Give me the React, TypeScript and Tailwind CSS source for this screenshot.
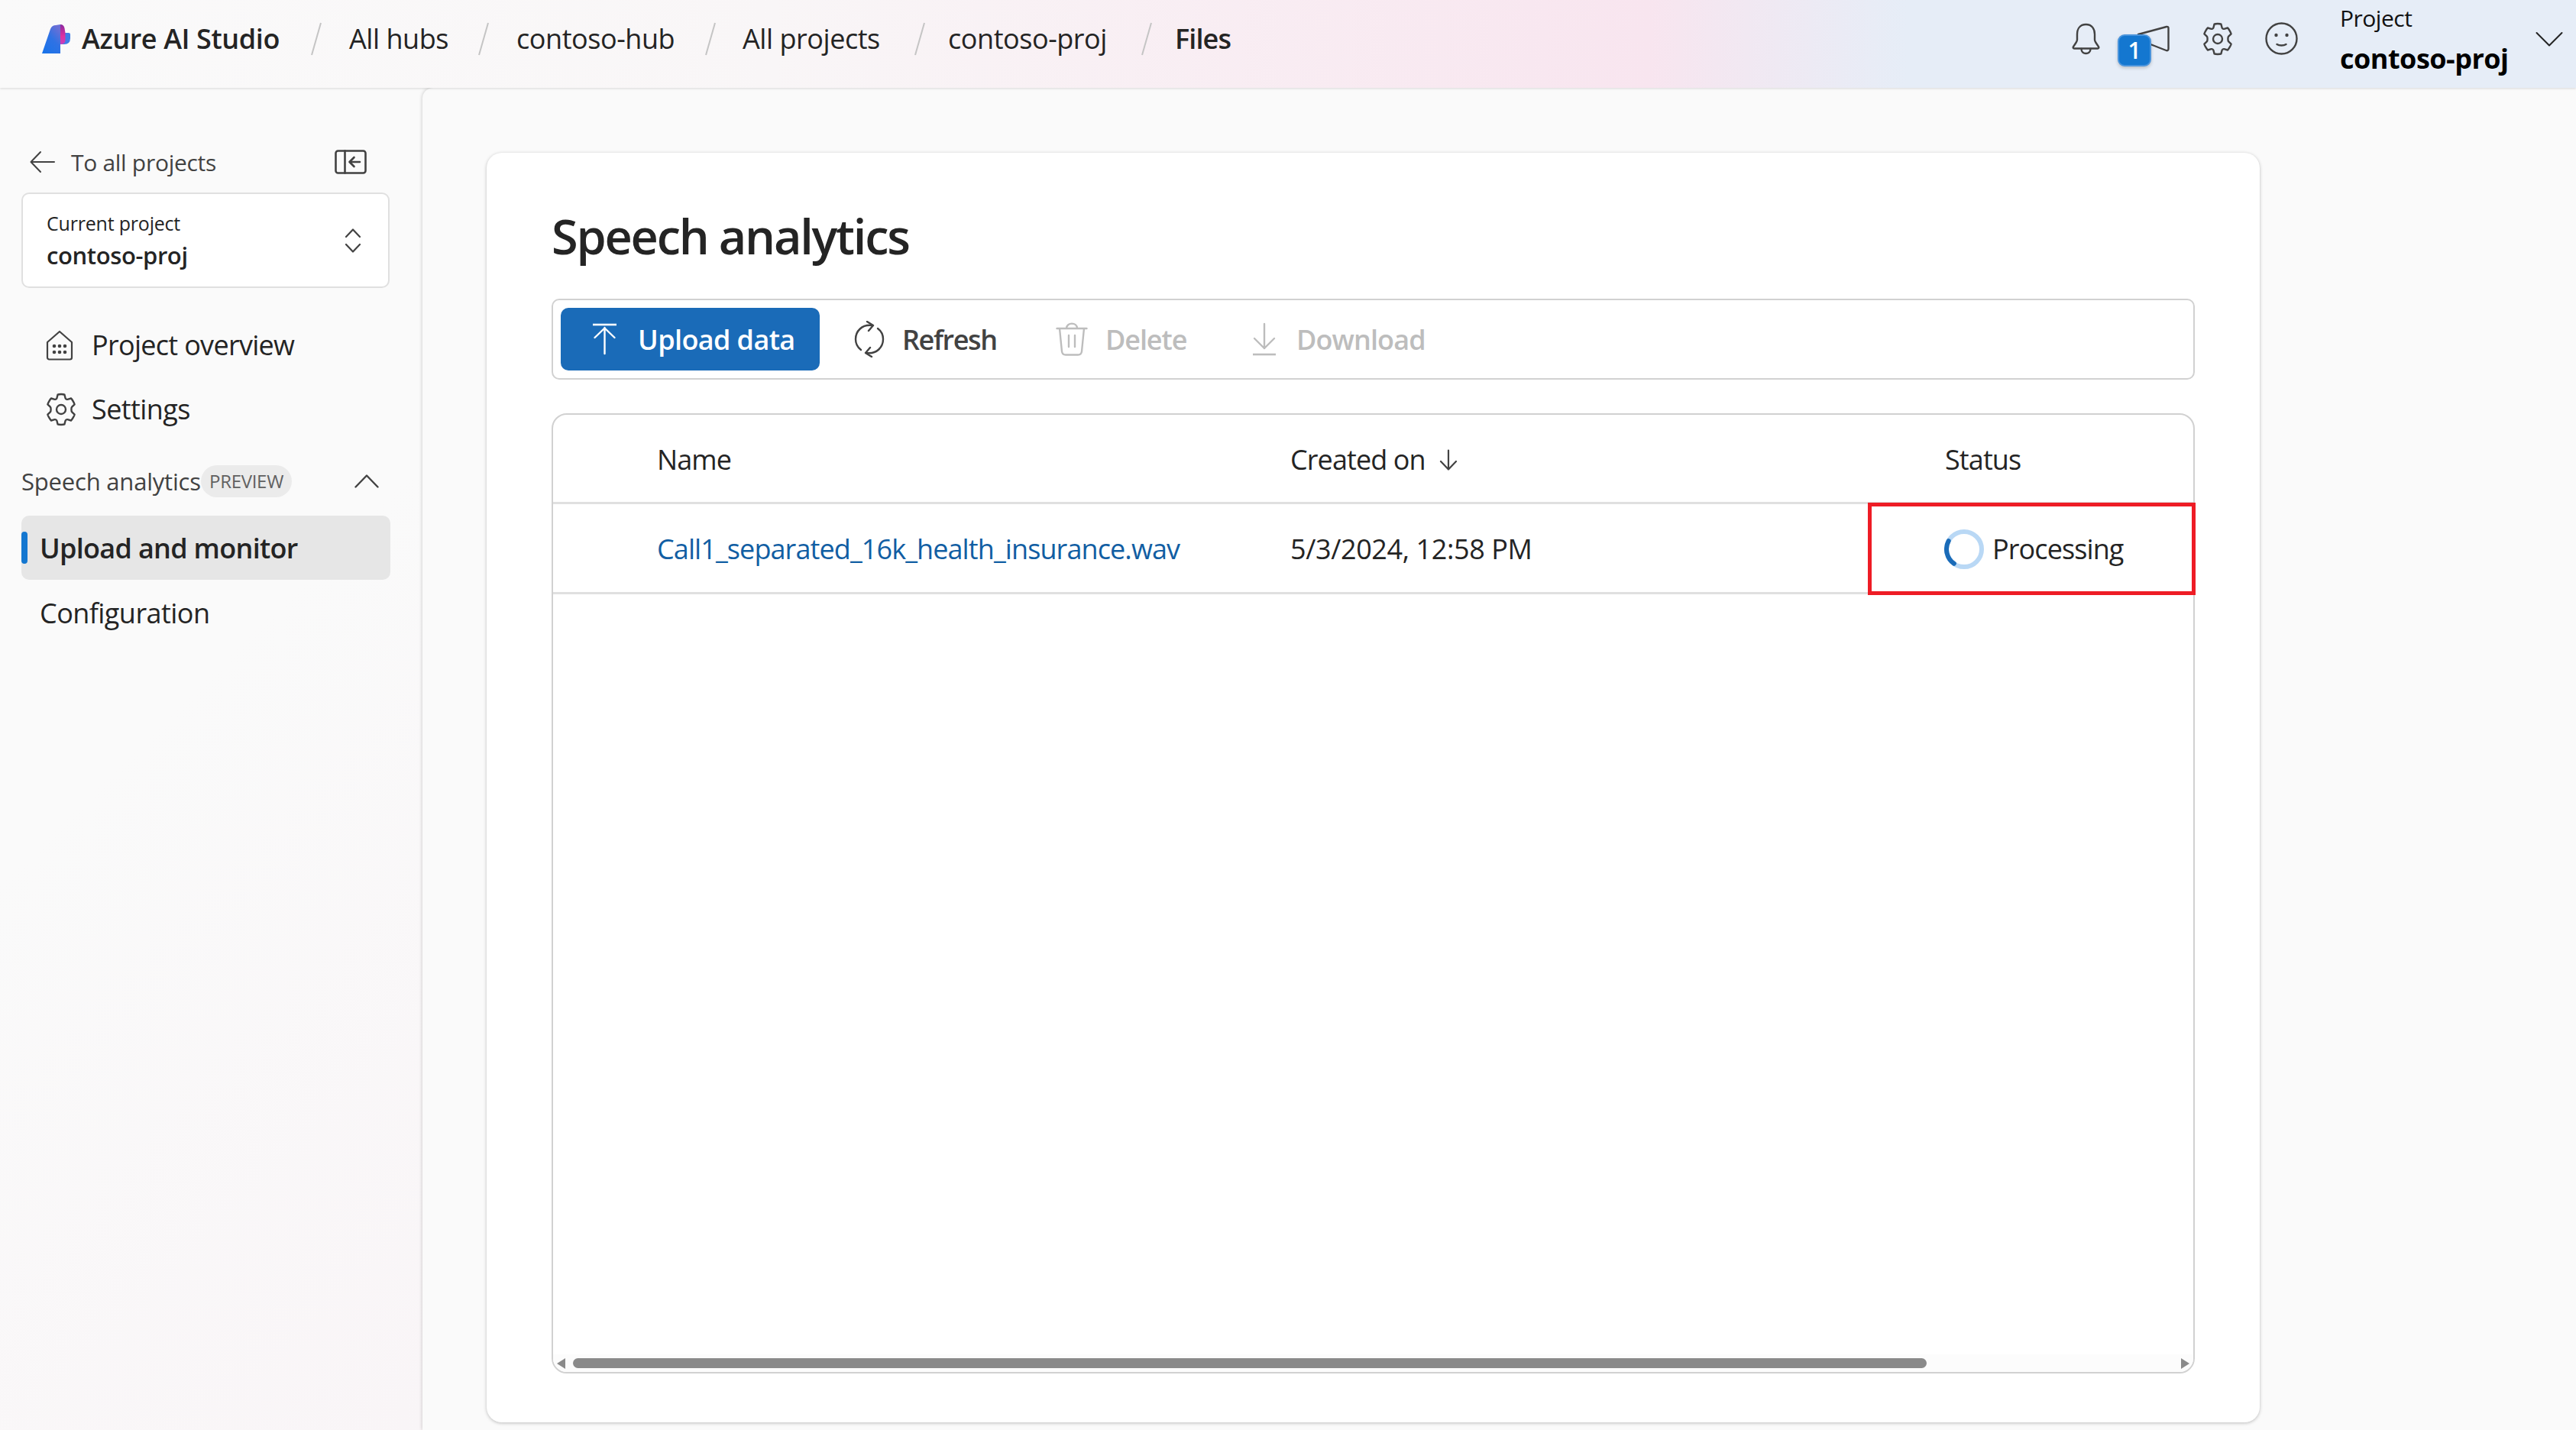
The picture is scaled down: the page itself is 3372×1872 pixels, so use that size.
import React from "react";

const S = ({ w, h, vb, children, className = "", color = "#424242", sw = 2 }: any) => (
  <svg width={w} height={h} viewBox={vb} fill="none" stroke={color} strokeWidth={sw} strokeLinecap="round" strokeLinejoin="round" className={"shrink-0 " + className}>
    {children}
  </svg>
);

const Logo = () => (
  <svg width="38" height="40" viewBox="14 8 38 40" className="shrink-0">
    <defs>
      <linearGradient id="lg1" x1="0" y1="1" x2="0.7" y2="0">
        <stop offset="0" stopColor="#1673ea" />
        <stop offset="0.6" stopColor="#2f72e4" />
        <stop offset="1" stopColor="#6a6fd6" />
      </linearGradient>
      <linearGradient id="lg2" x1="0" y1="0" x2="0" y2="1">
        <stop offset="0" stopColor="#8a2aa0" />
        <stop offset="0.6" stopColor="#e030a0" />
        <stop offset="1" stopColor="#c040c0" />
      </linearGradient>
    </defs>
    <path d="M44 20 H49 Q51 20 51 22 V27 Q51 35 43 35 H38 V20 Z" fill="#3f7ce8" />
    <path d="M14 47 L25 15 Q27 10 32 10 L38 9 V47 Z" fill="url(#lg1)" />
    <path d="M38 9 Q42.5 9 43.5 14 L44.5 20 L44.5 30 Q44.5 35 38 35 Z" fill="url(#lg2)" />
  </svg>
);

const Slash = ({ className = "" }: { className?: string }) => (
  <svg width="16" height="44" viewBox="0 0 16 44" className={"shrink-0 " + className}>
    <line x1="14" y1="1" x2="2" y2="43" stroke="#c4c4c4" strokeWidth="2" />
  </svg>
);

const Gear = ({ size = 44, color = "#424242" }: { size?: number; color?: string }) => (
  <S w={size} h={size} vb="0 0 44 44" color={color} sw={2.4}>
    <circle cx="22" cy="22" r="6" />
    <path d="M17.6 2.6 C19 1.8 25 1.8 26.4 2.6 L27.6 7.2 C27.9 8.3 29.3 9.1 30.4 8.8 L35 7.5 C36.4 8.7 39.4 13.8 39.6 15.4 L36.2 18.7 C35.4 19.5 35.4 21.1 35.4 22 C35.4 22.9 35.4 24.5 36.2 25.3 L39.6 28.6 C39.4 30.2 36.4 35.3 35 36.5 L30.4 35.2 C29.3 34.9 27.9 35.7 27.6 36.8 L26.4 41.4 C25 42.2 19 42.2 17.6 41.4 L16.4 36.8 C16.1 35.7 14.7 34.9 13.6 35.2 L9 36.5 C7.6 35.3 4.6 30.2 4.4 28.6 L7.8 25.3 C8.6 24.5 8.6 22.9 8.6 22 C8.6 21.1 8.6 19.5 7.8 18.7 L4.4 15.4 C4.6 13.8 7.6 8.7 9 7.5 L13.6 8.8 C14.7 9.1 16.1 8.3 16.4 7.2 Z" />
  </S>
);

const font = "font-['Open_Sans',sans-serif]";

export default function App() {
  return (
    <div className={"w-[3372px] h-[1872px] overflow-hidden flex flex-col bg-[#fafafa] text-[#242424] " + font}>
      {/* Header */}
      <header className="relative z-10 h-[115px] shrink-0 flex items-center pl-[55px] pr-[17px] bg-[linear-gradient(to_right,#fafafa_0%,#f9f6f7_30%,#f8e5ef_64%,#e6edf7_74%,#e6edf7_100%)] shadow-[0_1px_3px_rgba(0,0,0,0.14)]">
        <div className="flex items-center h-full pb-[14px]">
          <Logo />
          <span className="ml-[14px] w-[299px] text-[36px] font-semibold whitespace-nowrap tracking-[-0.4px]">Azure AI Studio</span>
          <Slash />
          <span className="ml-[35px] w-[168px] text-[36px] whitespace-nowrap tracking-[-0.45px]">All hubs</span>
          <Slash />
          <span className="ml-[35px] w-[246px] text-[36px] whitespace-nowrap tracking-[-0.45px]">contoso-hub</span>
          <Slash />
          <span className="ml-[34px] w-[224px] text-[36px] whitespace-nowrap tracking-[-0.45px]">All projects</span>
          <Slash />
          <span className="ml-[29px] w-[252px] text-[36px] whitespace-nowrap tracking-[-0.45px]">contoso-proj</span>
          <Slash />
          <span className="ml-[29px] text-[36px] font-semibold whitespace-nowrap tracking-[-0.9px]">Files</span>
        </div>
        <div className="ml-auto flex items-center h-full">
          <div className="flex items-center pb-[14px]">
            <S w={37} h={42} vb="0 0 37 42" sw={2.4}>
              <path d="M18.5 2 C10.5 2 7 8 7 15 V22 C7 25 3 29 1.8 31.5 C1.4 32.6 2 33.5 3 33.5 H34 C35 33.5 35.6 32.6 35.2 31.5 C34 29 30 25 30 22 V15 C30 8 26.5 2 18.5 2 Z" />
              <path d="M12.5 34 C12.5 42 24.5 42 24.5 34" />
            </S>
            <div className="relative ml-[48px] w-[43px] h-[36px]">
              <S w={43} h={36} vb="0 0 43 36" sw={2.4}>
                <path d="M2 12 L39 2 C40.5 1.6 41.5 2.5 41.5 4 V31 C41.5 33 40 33.6 38.5 33 L18 25" />
                <path d="M18 25 C17 31 12 31 10 26" />
              </S>
              <div className="absolute left-[-25px] top-[12px] w-[44px] h-[42px] rounded-[9px] bg-[#1477d0] border-2 border-[#4a94dc] shadow-[0_2px_4px_rgba(0,0,0,0.2)] flex items-center justify-center text-white text-[30px] font-semibold leading-none">1</div>
            </div>
            <div className="ml-[41px]"><Gear /></div>
            <S w={43} h={43} vb="0 0 43 43" className="ml-[40px]" sw={2.4}>
              <circle cx="21.5" cy="21.5" r="20" />
              <circle cx="14.5" cy="17" r="2.2" fill="#424242" stroke="none" />
              <circle cx="28.5" cy="17" r="2.2" fill="#424242" stroke="none" />
              <path d="M15.5 29 C18.5 31 24.5 31 27.5 29" />
            </S>
          </div>
          <div className="ml-[55px] w-[256px] flex flex-col h-full justify-start pt-[2px]">
            <span className="text-[30px] leading-[44px] text-[#111] whitespace-nowrap tracking-[-0.5px]">Project</span>
            <span className="text-[36px] leading-[62px] font-bold text-black whitespace-nowrap tracking-[-0.5px]">contoso-proj</span>
          </div>
          <S w={36} h={20} vb="0 0 36 20" className="mb-[14px]" color="#222">
            <path d="M1.5 2 L18 18.5 L34.5 2" />
          </S>
        </div>
      </header>

      <div className="flex-1 flex min-h-0">
        {/* Sidebar */}
        <aside className="w-[553px] shrink-0 px-[28px] pt-[80px] flex flex-col bg-[linear-gradient(135deg,#fafafa_0%,#fafafa_45%,#f9f5f7_100%)]">
          <div className="h-[34px] flex items-center">
            <S w={34} h={30} vb="0 0 34 30" className="ml-[11px]">
              <path d="M32 15 H2 M14 2 L1.5 15 L14 28" />
            </S>
            <span className="ml-[20px] text-[30px] text-[#424242] whitespace-nowrap tracking-[-0.3px] w-[345px]">To all projects</span>
            <S w={42} h={32} vb="0 0 42 32" sw={2.6}>
              <rect x="1.5" y="1.5" width="39" height="29" rx="3" />
              <path d="M13.5 1.5 V30.5" />
              <path d="M33 16 H20 M25.5 10 L19.5 16 L25.5 22" />
            </S>
          </div>
          <div className="mt-[23px] h-[125px] w-[482px] rounded-[10px] bg-white border-2 border-[#e0e0e0] pl-[31px] pr-[35px] flex items-center justify-between">
            <div className="flex flex-col">
              <span className="text-[25px] leading-[38px] whitespace-nowrap tracking-[-0.2px]">Current project</span>
              <span className="text-[31px] leading-[46px] font-semibold whitespace-nowrap tracking-[-0.4px]">contoso-proj</span>
            </div>
            <S w={22} h={32} vb="0 0 22 32" sw={2.2}>
              <path d="M2 11 L11 1.5 L20 11 M2 21 L11 30.5 L20 21" />
            </S>
          </div>
          <div className="mt-[33px] h-[84px] flex items-center pl-[32px]">
            <S w={36} h={40} vb="0 0 36 40" sw={2.2}>
              <path d="M18 2 L34 16 V36 C34 37.5 33 38.5 31.5 38.5 H4.5 C3 38.5 2 37.5 2 36 V16 Z" />
              <g fill="#424242" stroke="none">
                <circle cx="11" cy="21" r="2.3" /><circle cx="18" cy="21" r="2.3" /><circle cx="25" cy="21" r="2.3" />
                <circle cx="11" cy="29" r="2.3" /><circle cx="18" cy="29" r="2.3" /><circle cx="25" cy="29" r="2.3" />
              </g>
            </S>
            <span className="ml-[24px] text-[36px] whitespace-nowrap tracking-[-0.7px]">Project overview</span>
          </div>
          <div className="h-[84px] flex items-center pl-[30px]">
            <Gear size={44} />
            <span className="ml-[18px] text-[36px] whitespace-nowrap tracking-[-0.6px]">Settings</span>
          </div>
          <div className="mt-[23px] h-[60px] flex items-center pb-[2px]">
            <span className="text-[31px] font-medium text-[#424242] whitespace-nowrap tracking-[-0.2px] w-[235px]">Speech analytics</span>
            <span className="h-[42px] w-[119px] rounded-full bg-[#ebebeb] flex items-center justify-center text-[24px] text-[#616161] tracking-[-0.3px]">PREVIEW</span>
            <S w={32} h={18} vb="0 0 32 18" className="ml-[82px]" sw={2.4}>
              <path d="M1.5 16.5 L16 1.5 L30.5 16.5" />
            </S>
          </div>
          <div className="relative mt-[14px] h-[84px] w-[483px] rounded-[10px] bg-[#e6e6e6] flex items-center pl-[24px]">
            <div className="absolute left-0 top-[21px] h-[42px] w-[8px] rounded-full bg-[#1477d0]" />
            <span className="pt-[2px] text-[36px] font-semibold whitespace-nowrap tracking-[-0.7px]">Upload and monitor</span>
          </div>
          <div className="mt-[2px] h-[84px] flex items-center pl-[24px]">
            <span className="text-[36px] whitespace-nowrap tracking-[-0.55px]">Configuration</span>
          </div>
        </aside>

        {/* Main */}
        <main className="flex-1 min-w-0 bg-[#fafafa] rounded-tl-[14px] shadow-[0_0_5px_rgba(0,0,0,0.22)] pl-[84px] pt-[85px] pb-[10px]">
          <div className="w-[2321px] h-full rounded-[20px] bg-white shadow-[0_1px_4px_rgba(0,0,0,0.25)] px-[85px] flex flex-col">
            <h1 className="h-[191px] shrink-0 flex items-center pt-[28px] text-[63px] font-semibold tracking-[-2.2px] whitespace-nowrap">Speech analytics</h1>
            <div className="h-[106px] shrink-0 rounded-[10px] border-2 border-[#d1d1d1] pl-[10px] flex items-center">
              <div className="w-[339px] h-[82px] rounded-[10px] bg-[#1a6bb8] text-white flex items-center pl-[41px]">
                <S w={33} h={42} vb="0 0 33 42" color="#fff" sw={2.4}>
                  <path d="M1 2 H32" strokeWidth={2.6} strokeLinecap="butt" />
                  <path d="M16.5 40 V6 M3.5 19 L16.5 6.5 L29.5 19" />
                </S>
                <span className="ml-[27px] pt-[2px] text-[36px] font-semibold whitespace-nowrap tracking-[-0.6px]">Upload data</span>
              </div>
              <S w={40} h={48} vb="0 0 40 48" className="ml-[45px]" sw={2.4}>
                <path d="M24 6 C10 4 2 14 2 24 C2 30 5 35 9 38" />
                <path d="M16 42 C30 44 38 34 38 24 C38 18 35 13 31 10" />
                <path d="M17 1 L25 6 L19 13 M23 47 L15 42 L21 35" />
              </S>
              <span className="ml-[23px] pt-[2px] w-[123px] text-[36px] font-semibold text-[#424242] whitespace-nowrap tracking-[-1.4px]">Refresh</span>
              <S w={42} h={44} vb="0 0 42 44" className="ml-[78px]" color="#bdbdbd" sw={2.4}>
                <path d="M1.5 8 H40.5 M14 8 C14 -0.5 28 -0.5 28 8 M5 8 L8 38 C8.3 41 10 42.5 13 42.5 H29 C32 42.5 33.7 41 34 38 L37 8 M17 17 V32 M25 17 V32" />
              </S>
              <span className="ml-[23px] pt-[2px] w-[108px] text-[36px] font-semibold text-[#bdbdbd] whitespace-nowrap tracking-[-1.1px]">Delete</span>
              <S w={32} h={44} vb="0 0 32 44" className="ml-[84px]" color="#bdbdbd" sw={2.4}>
                <path d="M16 2 V34 M3 21 L16 34 L29 21" />
                <path d="M1 42 H31" strokeWidth={2.6} strokeLinecap="butt" />
              </S>
              <span className="ml-[26px] pt-[2px] text-[36px] font-semibold text-[#bdbdbd] whitespace-nowrap tracking-[-0.9px]">Download</span>
            </div>
            <div className="relative mt-[44px] mb-[64px] flex-1 min-h-0 rounded-[20px] border-2 border-[#d1d1d1] flex flex-col">
              <div className="h-[117px] shrink-0 grid grid-cols-[965px_857px_1fr] items-center border-b-[3px] border-[#e0e0e0] text-[36px] tracking-[-0.9px] pt-[4px]">
                <span className="pl-[136px]">Name</span>
                <span className="flex items-center">
                  Created on
                  <S w={24} h={28} vb="0 0 24 28" className="ml-[18px]" sw={2.2}>
                    <path d="M12 1.5 V26 M2 16 L12 26.5 L22 16" />
                  </S>
                </span>
                <span>Status</span>
              </div>
              <div className="h-[118px] shrink-0 grid grid-cols-[965px_857px_1fr] items-center border-b-[3px] border-[#e0e0e0] text-[36px] tracking-[-0.9px] pt-[2px]">
                <span className="pl-[136px] text-[#115ea3] whitespace-nowrap">Call1_separated_16k_health_insurance.wav</span>
                <span className="whitespace-nowrap tracking-[-0.4px]">5/3/2024, 12:58 PM</span>
                <span className="flex items-center">
                  <svg width="52" height="52" viewBox="0 0 52 52" fill="none" className="shrink-0 -ml-[1px]">
                    <circle cx="26" cy="26" r="23" stroke="#b9d8f5" strokeWidth="6" />
                    <path d="M5.7 15.2 A23 23 0 0 0 12.8 44.8" stroke="#1a6bb8" strokeWidth="6" strokeLinecap="round" />
                  </svg>
                  <span className="ml-[11px]">Processing</span>
                </span>
              </div>
              {/* highlight over the status cell */}
              <div className="absolute right-[-3px] top-[115px] w-[429px] h-[121px] border-[5px] border-[#ee1c25]" />
              <div className="mt-auto h-[23px] rounded-b-[18px] bg-[#fcfcfc] flex items-center pl-[5px] pr-[5px]">
                <svg width="11" height="14" viewBox="0 0 11 14" className="shrink-0"><path d="M11 0 V14 L0 7 Z" fill="#8a8a8a" /></svg>
                <div className="ml-[10px] w-[1772px] h-[13px] rounded-full bg-[#8a8a8a]" />
                <svg width="11" height="14" viewBox="0 0 11 14" className="shrink-0 ml-auto"><path d="M0 0 V14 L11 7 Z" fill="#8a8a8a" /></svg>
              </div>
            </div>
          </div>
        </main>
      </div>
    </div>
  );
}
